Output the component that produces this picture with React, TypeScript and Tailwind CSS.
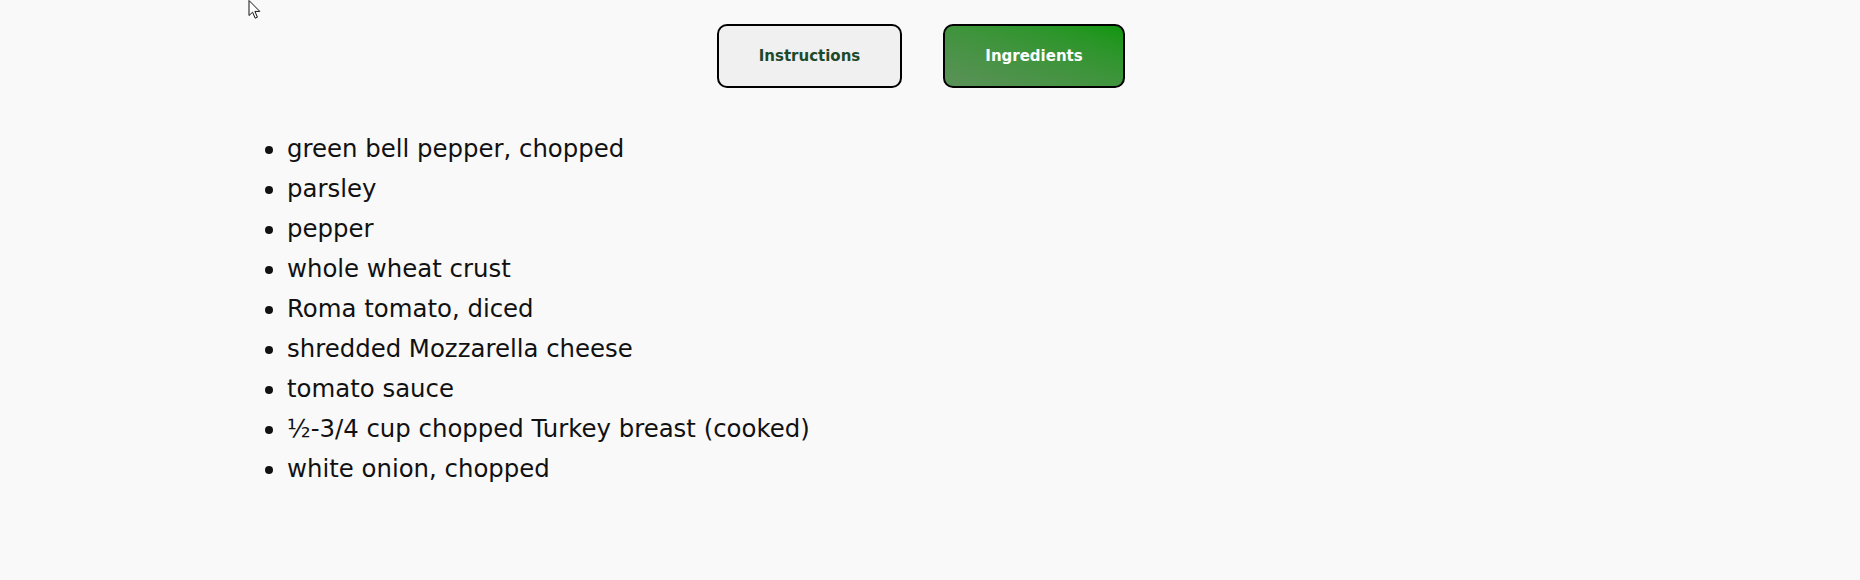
import React from 'react';

const ingredients = [
  'green bell pepper, chopped',
  'parsley',
  'pepper',
  'whole wheat crust',
  'Roma tomato, diced',
  'shredded Mozzarella cheese',
  'tomato sauce',
  '½-3/4 cup chopped Turkey breast (cooked)',
  'white onion, chopped',
];

function Cursor() {
  return (
    <svg
      className="absolute left-[248px] top-0"
      width="14"
      height="20"
      viewBox="0 0 14 20"
    >
      <path
        d="M1 0.5 L1 15.5 L4.6 12.2 L7.2 18.2 L9.4 17.2 L6.9 11.4 L11.8 11.4 Z"
        fill="#fff"
        stroke="#111"
        strokeWidth="1"
        strokeLinejoin="round"
      />
    </svg>
  );
}

export default function App() {
  const [tab, setTab] = React.useState<'instructions' | 'ingredients'>('ingredients');

  return (
    <main
      className="relative min-h-screen bg-[#f9f9f9] text-[#111]"
      style={{ fontFamily: '"DejaVu Sans", sans-serif' }}
    >
      <Cursor />

      {/* Tabs */}
      <div className="flex justify-center gap-[41px] pt-[24px] pr-[18px]">
        <button
          onClick={() => setTab('instructions')}
          className={
            tab === 'instructions'
              ? 'w-[185px] h-[64px] rounded-[10px] border-2 border-black bg-gradient-to-tr from-[#5a9158] to-[#0a960a] text-white text-[15px] font-bold'
              : 'w-[185px] h-[64px] rounded-[10px] border-2 border-black bg-[#f0f0f0] text-[#1d4a2a] text-[15px] font-bold'
          }
        >
          Instructions
        </button>
        <button
          onClick={() => setTab('ingredients')}
          className={
            tab === 'ingredients'
              ? 'w-[182px] h-[64px] rounded-[10px] border-2 border-black bg-gradient-to-tr from-[#5a9158] to-[#0a960a] text-white text-[15px] font-bold'
              : 'w-[182px] h-[64px] rounded-[10px] border-2 border-black bg-[#f0f0f0] text-[#1d4a2a] text-[15px] font-bold'
          }
        >
          Ingredients
        </button>
      </div>

      {/* Ingredient list */}
      <ul className="mt-[41px] ml-[287px] list-disc text-[24.4px] leading-[40px]">
        {ingredients.map((item, i) => (
          <li key={i}>{item}</li>
        ))}
      </ul>
    </main>
  );
}
